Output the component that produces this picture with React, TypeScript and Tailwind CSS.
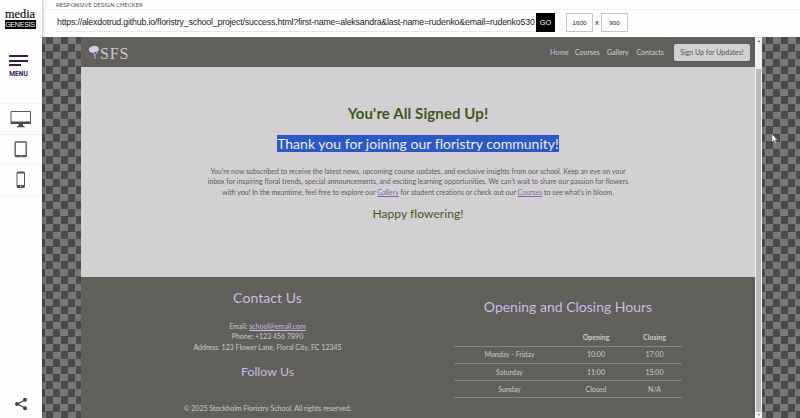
import type { ReactNode } from 'react';

const checker =
  'bg-[conic-gradient(#7a777a_25%,#4c494c_0_50%,#7a777a_0_75%,#4c494c_0)] bg-[length:15px_15px] bg-position-[-4px_7px]';

function Line({ children, className = '' }: { children: ReactNode; className?: string }) {
  return <span className={`block whitespace-nowrap ${className}`}>{children}</span>;
}

function Sidebar() {
  return (
    <aside className="z-10 flex h-full w-[42px] shrink-0 flex-col items-center bg-[#fefdfe] shadow-[1px_0_3px_rgba(0,0,0,0.25)]">
      <div className="mt-[9px] mr-[2px] flex h-[20px] w-[31px] flex-col items-center">
        <span className="h-[11px] font-['Liberation_Serif',serif] text-[12.3px] leading-[11px] text-[#111] [-webkit-text-stroke:0.2px_#111]">
          media
        </span>
        <span className="flex h-[9px] w-[31px] items-center justify-center bg-black font-['Liberation_Sans',sans-serif] text-[7px] leading-[9px] tracking-[-0.2px] text-white">
          GENESIS
        </span>
      </div>
      <div className="mt-[26px] mr-[5px] flex w-[19px] flex-col gap-[2.5px]">
        <i className="h-[2px] w-[19px] bg-[#341b52]" />
        <i className="h-[2px] w-[19px] bg-[#341b52]" />
        <i className="h-[2px] w-[12px] bg-[#341b52]" />
      </div>
      <span className="mt-[4px] mr-[5px] font-[Roboto,sans-serif] text-[6.6px] leading-[8px] font-bold text-[#341b52]">MENU</span>
      <div className="mt-[25px] flex h-[31px] w-full items-center justify-center border-t border-[#f3f1f3]">
        <svg width="22" height="18" viewBox="0 0 22 18">
          <path d="M1 1.5h19.500v12H1z" fill="none" stroke="#555" />
          <path d="M1 11.500h19.500v2.300H1zM8.500 14h4.500v2h1.500v1.200H7V16h1.500z" fill="#4a4a4a" />
        </svg>
      </div>
      <div className="flex h-[30px] w-full items-center justify-center border-t border-[#f3f1f3]">
        <svg width="14" height="17" viewBox="0 0 14 17">
          <rect x="1.200" y="1" width="11" height="14.500" rx=".7" fill="none" stroke="#555" strokeWidth="1.300" />
          <path d="M1 14h11.500v2H1z" fill="#555" />
          <circle cx="6.700" cy="15" r=".6" fill="#fff" />
        </svg>
      </div>
      <div className="flex h-[32px] w-full items-center justify-center border-y border-[#f3f1f3]">
        <svg width="10" height="18" viewBox="0 0 10 18">
          <rect x="1" y="1" width="7.500" height="15.500" rx="1" fill="none" stroke="#555" />
          <path d="M1 1h7.500v1.500H1zM1 14h7.500v2.500H1z" fill="#4a4a4a" />
          <circle cx="4.700" cy="15.200" r=".7" fill="#fff" />
        </svg>
      </div>
      <svg className="mt-auto mb-[7px]" width="14" height="14" viewBox="0 0 14 14">
        <path d="M11 3 3.500 7l7.500 4" fill="none" stroke="#444" strokeWidth="1.200" />
        <circle cx="11" cy="2.700" r="2" fill="#444" />
        <circle cx="3" cy="7" r="2" fill="#444" />
        <circle cx="11" cy="11.300" r="2" fill="#444" />
      </svg>
    </aside>
  );
}

function TopBar() {
  return (
    <header className="flex h-[37px] flex-col bg-[#fefefe] font-['Liberation_Sans',sans-serif]">
      <div className="h-[10px] border-b border-[#f1eff1] pl-[14px] font-[Roboto,sans-serif] text-[6px] leading-[9px] text-[#555]">
        <Line className="tracking-[0.05px]">RESPONSIVE DESIGN CHECKER</Line>
      </div>
      <div className="mt-[3px] flex h-[19px] items-center pl-[14px] text-[#222]">
        <div className="flex h-full w-[480px] items-center border-b border-[#e8e6e8] pt-[2px] text-[8.8px]">
          <Line className="pl-px tracking-[-0.19px]">
            https://alexdotrud.github.io/floristry_school_project/success.html?first-name=aleksandra&amp;last-name=rudenko&amp;email=rudenko530
          </Line>
        </div>
        <button className="z-10 h-[19px] w-[19px] bg-black text-[7.4px] text-white">GO</button>
        <span className="ml-[11px] flex h-[19px] w-[27px] items-center justify-center border border-[#c6c4c6] text-[6.2px]">1600</span>
        <span className="w-[8px] text-center text-[8px]">x</span>
        <span className="flex h-[19px] w-[27px] items-center justify-center border border-[#c6c4c6] text-[6.2px]">900</span>
      </div>
    </header>
  );
}

function Nav() {
  return (
    <nav className="flex h-[30px] shrink-0 items-center bg-[#605f5a] pr-[5px] pl-[7px] text-[7px] text-[#d3d1d3]">
      <svg width="12" height="15" viewBox="0.5 0 12 15">
        <path d="M6 8.500q2 2 1.500 5.500M9.500 7q-1 3-2.500 3.500" fill="none" stroke="#c9c5c9" strokeWidth=".9" />
        <path d="M1.500 5.500Q.5 3 3.500 2q2-2 5-1 3.200 1 2.900 4Q10.500 7.500 7.500 7 5.500 9 4 7.500 2 7.500 1.500 5.500z" fill="#d6c8ee" />
      </svg>
      <span className="mt-[2px] font-['Liberation_Serif',serif] text-[16px] leading-[15px] tracking-[0.9px] text-[#cccacc]">SFS</span>
      <div className="ml-auto flex items-center">
        <span className="w-[25px] text-[#cdbbe8]">Home</span>
        <span className="w-[32px]">Courses</span>
        <span className="w-[29.500px]">Gallery</span>
        <span className="w-[37.500px]">Contacts</span>
        <span className="flex h-[17px] w-[76px] items-center justify-center rounded-[2px] bg-[#d2d0d3] text-[#55544f]">
          <Line>Sign Up for Updates!</Line>
        </span>
      </div>
    </nav>
  );
}

function Main() {
  return (
    <main className="flex h-[210px] shrink-0 flex-col items-center bg-[#d2d0d3] pt-[37px] text-center text-[#3f581b]">
      <h1 className="text-[15px] leading-[18px] font-bold">
        <Line className="tracking-[0.1px]">You're All Signed Up!</Line>
      </h1>
      <h2 className="mt-[13px] h-[17px] bg-[#2b58c5] text-[14px] leading-[17px] text-[#eeeef4]">
        <Line className="tracking-[0.02px]">Thank you for joining our floristry community!</Line>
      </h2>
      <p className="mt-[14px] text-[7px] leading-[10.400px] text-[#5d5b59]">
        <Line className="tracking-[-0.01px]">You're now subscribed to receive the latest news, upcoming course updates, and exclusive insights from our school. Keep an eye on your</Line>
        <Line className="tracking-[-0.01px]">inbox for inspiring floral trends, special announcements, and exciting learning opportunities. We can't wait to share our passion for flowers</Line>
        <Line className="tracking-[-0.01px]">
          with you! In the meantime, feel free to explore our <a className="text-[#8165ab] underline">Gallery</a> for student creations or check out our{' '}
          <a className="text-[#8165ab] underline">Courses</a> to see what's in bloom.
        </Line>
      </p>
      <p className="mt-[9px] text-[12px] leading-[16px]">
        <Line className="tracking-[0.06px]">Happy flowering!</Line>
      </p>
    </main>
  );
}

const hours = [
  ['Monday - Friday', '10:00', '17:00'],
  ['Saturday', '11:00', '15:00'],
  ['Sunday', 'Closed', 'N/A'],
];

function Footer() {
  return (
    <footer className="flex grow bg-[#605f5a] text-[7px] text-[#cccacc]">
      <section className="flex w-[373px] flex-col items-center pt-[12px] text-center">
        <h3 className="text-[14px] leading-[18px] text-[#cdbbe8]">
          <Line className="tracking-[0.06px]">Contact Us</Line>
        </h3>
        <p className="mt-[14px] leading-[10.300px]">
          <Line>
            Email: <a className="text-[#cdbbe8] underline">school@email.com</a>
          </Line>
          <Line>Phone: +123 456 7890</Line>
          <Line>Address: 123 Flower Lane, Floral City, FC 12345</Line>
        </p>
        <h3 className="mt-[12px] text-[12.300px] leading-[16px] text-[#cdbbe8]">
          <Line className="tracking-[0.05px]">Follow Us</Line>
        </h3>
        <p className="mt-[23px] leading-[10px]">
          <Line>© 2025 Stockholm Floristry School. All rights reserved.</Line>
        </p>
      </section>
      <section className="w-[228px] pt-[21px] text-center">
        <h3 className="text-[14px] leading-[18px] text-[#cdbbe8]">
          <Line>Opening and Closing Hours</Line>
        </h3>
        <div className="mt-[13.500px] grid grid-cols-[111px_62px_55px]">
          <div className="col-span-3 grid h-[17px] grid-cols-subgrid items-center border-b border-[#858486] font-bold">
            <span />
            <span>Opening</span>
            <span>Closing</span>
          </div>
          {hours.map((row) => (
            <div key={row[0]} className="col-span-3 grid h-[17.300px] grid-cols-subgrid items-center border-b border-[#858486]">
              {row.map((cell) => (
                <span key={cell}>{cell}</span>
              ))}
            </div>
          ))}
        </div>
      </section>
    </footer>
  );
}

function Scrollbar() {
  return (
    <div className="flex h-full w-[7px] shrink-0 flex-col items-center bg-[#f1eff1]">
      <i className="mt-[3px] border-x-[1.500px] border-b-[2px] border-x-transparent border-b-[#444]" />
      <div className="mt-[27px] w-[5px] grow bg-[#bbb9bc]" />
      <i className="my-[2px] border-x-[1.500px] border-t-[2px] border-x-transparent border-t-[#666]" />
    </div>
  );
}

export default function App() {
  return (
    <div className="relative flex h-[418px] w-[800px] overflow-hidden bg-white">
      <Sidebar />
      <div className="flex min-w-0 grow flex-col">
        <TopBar />
        <div className={`flex h-[381px] pl-[39px] ${checker}`}>
          <div className="flex h-full w-[674px] shrink-0 flex-col font-[Lato,sans-serif]">
            <Nav />
            <Main />
            <Footer />
          </div>
          <Scrollbar />
        </div>
      </div>
      <svg className="absolute top-[133px] left-[771px]" width="7" height="11" viewBox="0 0 7 11">
        <path d="M1 1v8l1.800-1.600L4 10l1.200-.6L4.100 7h2.200z" fill="#fff" stroke="#555" strokeWidth=".4" />
      </svg>
    </div>
  );
}
